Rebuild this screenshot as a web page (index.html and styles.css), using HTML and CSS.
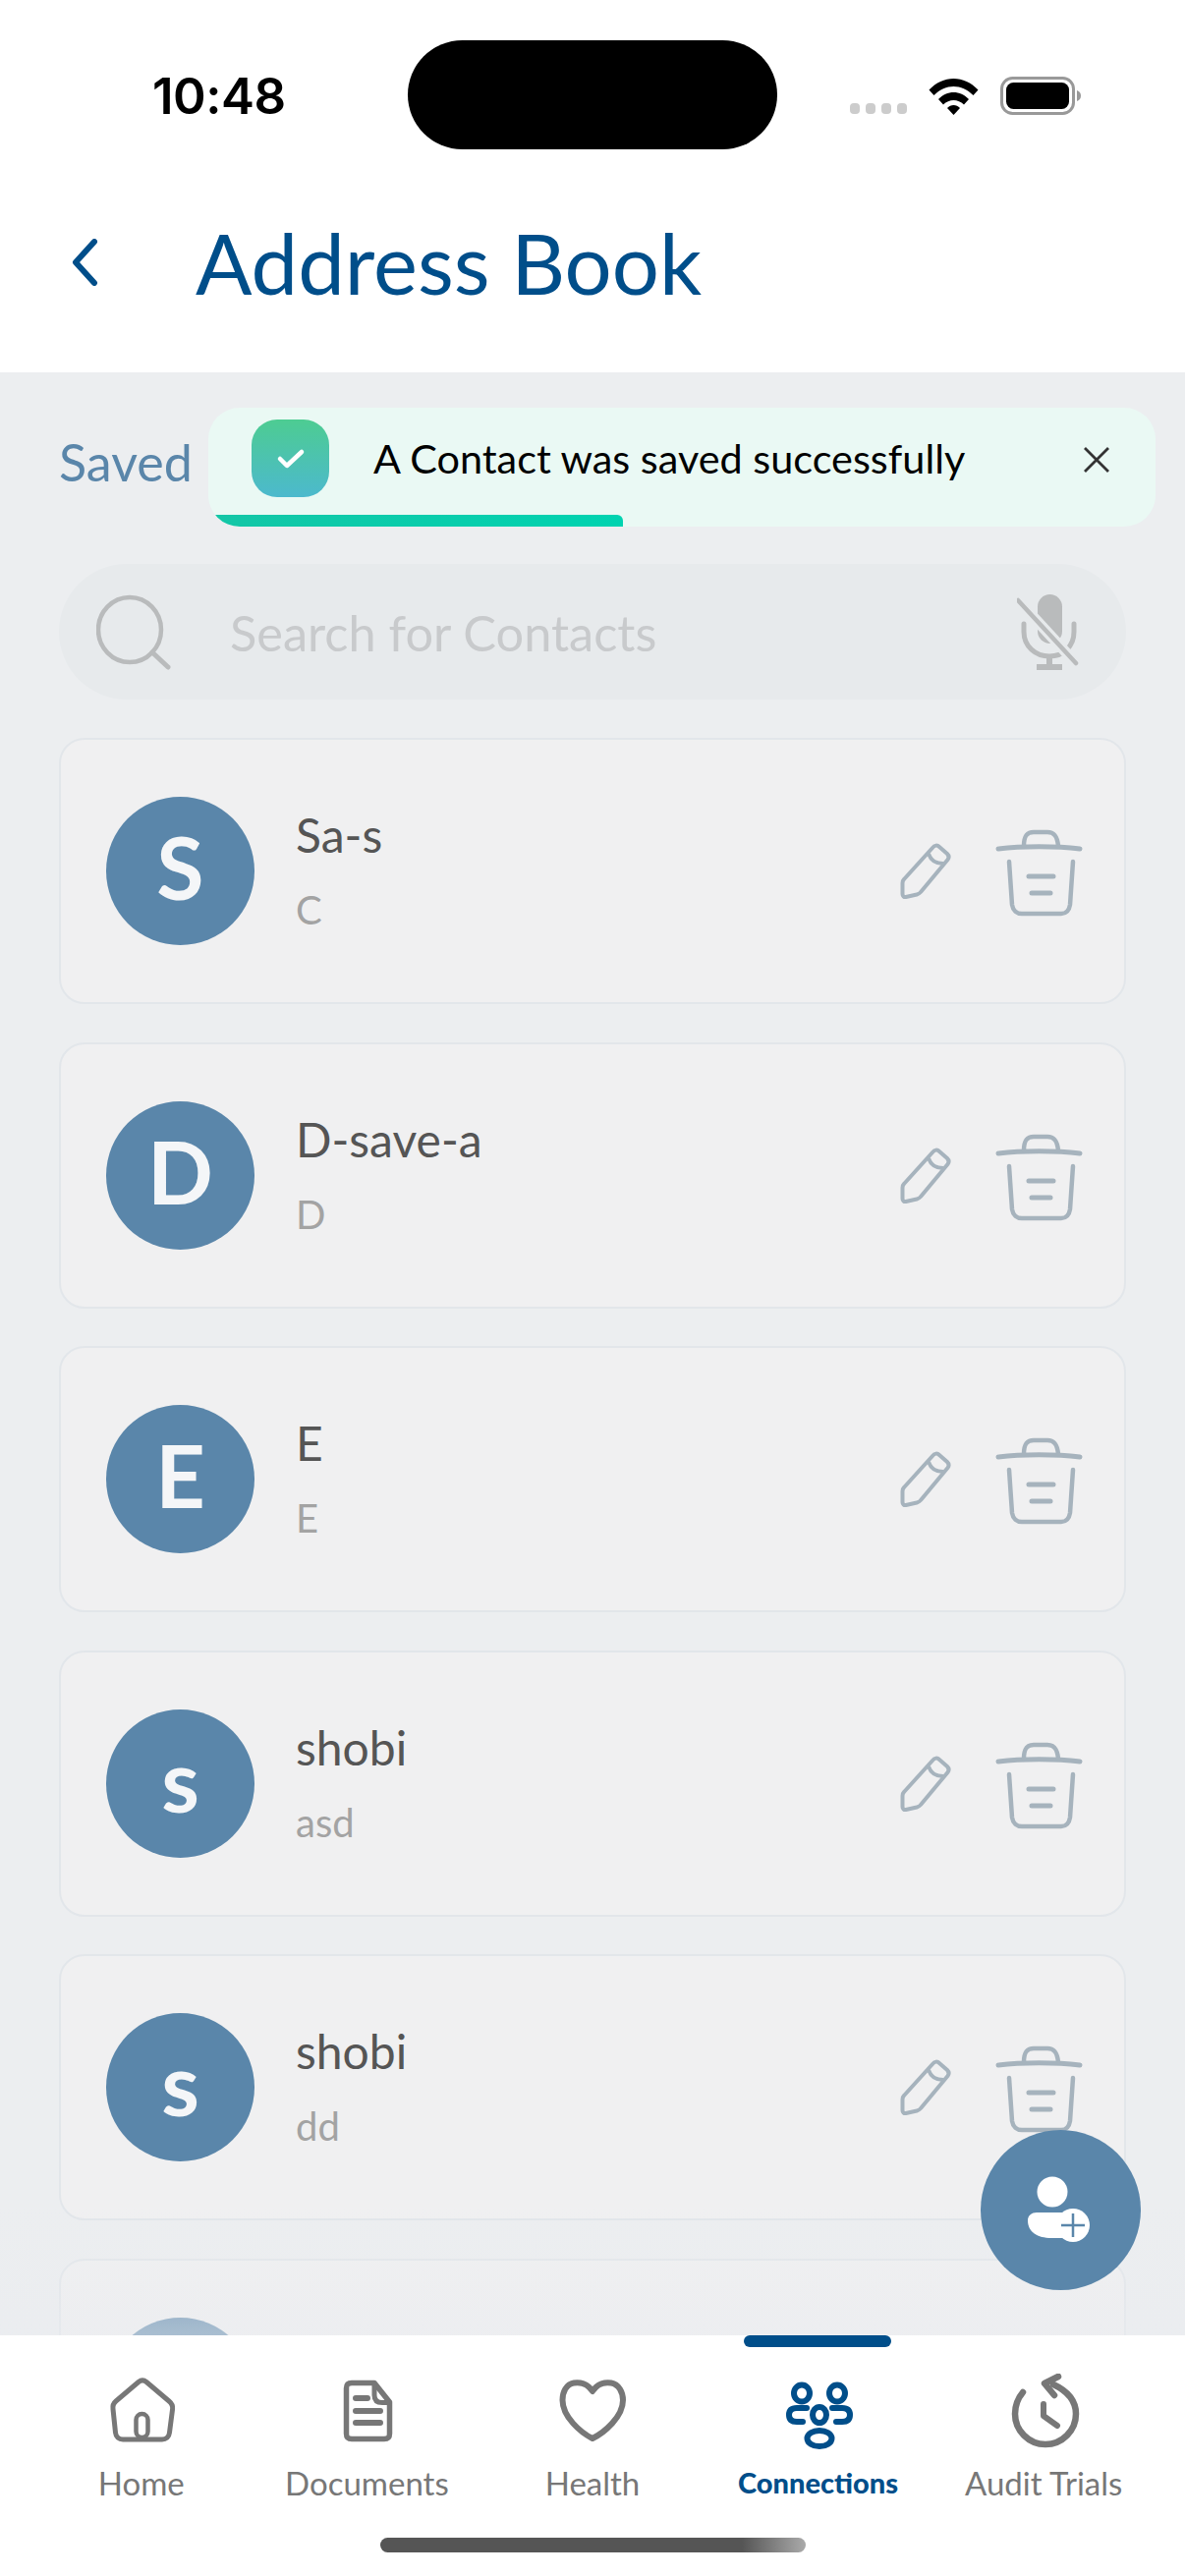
FILE: index.html
```html
<!DOCTYPE html>
<html lang="en">
<head>
<meta charset="utf-8">
<title>Address Book</title>
<link rel="stylesheet" href="styles.css">
</head>
<body>
<div class="phone">
  <header class="top">
    <div class="status">
      <span class="time">10:48</span>
      <div class="notch"></div>
      <div class="status-icons">
        <div class="signal"><i></i><i></i><i></i><i></i></div>
        <svg class="wifi" width="51" height="38" viewBox="0 0 50 38"><path d="M0 12.500C14 -3 36 -3 50 12.500L45 18C33 6 17 6 5 18Z" fill="#000"/><path d="M9.500 22C18 12.500 32 12.500 40.500 22L35.500 27.500C29.500 21.500 20.500 21.500 14.500 27.500Z" fill="#000"/><path d="M18.500 31C22 27 28 27 31.500 31L25 38Z" fill="#000"/></svg>
        <svg class="battery" width="82" height="39" viewBox="0 0 82 39"><rect x="1.500" y="1.500" width="73" height="36" rx="11" fill="none" stroke="#999" stroke-width="3"/><rect x="6" y="6" width="64" height="27" rx="7.500" fill="#000"/><path d="M78 14C81 15 82 17 82 19.500C82 22 81 24 78 25Z" fill="#999"/></svg>
      </div>
    </div>
    <div class="titlebar">
      <svg class="back" width="28" height="48" viewBox="0 0 28 48"><path d="M24 3L5 24L24 45" fill="none" stroke="#004e8a" stroke-width="6" stroke-linecap="round" stroke-linejoin="round"/></svg>
      <h1 class="title">Address Book</h1>
    </div>
  </header>

  <main class="content">
    <div class="saved">Saved</div>
    <div class="search">
      <svg class="search-icon" width="76" height="78" viewBox="0 0 76 78"><ellipse cx="34" cy="37" rx="32" ry="33" fill="none" stroke="#b9bbbc" stroke-width="4.500"/><path d="M57 60L73 75" stroke="#b9bbbc" stroke-width="5" stroke-linecap="round"/></svg>
      <span class="placeholder">Search for Contacts</span>
      <svg class="mic" width="64" height="80" viewBox="0 0 64 80"><rect x="21" y="2" width="25" height="50" rx="12.500" fill="#b9bbbc"/><path d="M7 32V40C7 55 19 65 33 65C47 65 58 55 58 40V32" fill="none" stroke="#b9bbbc" stroke-width="5" stroke-linecap="round"/><path d="M33 65V76M20 76H46" stroke="#b9bbbc" stroke-width="6"/><path d="M1 8L60 72" stroke="#e7eaec" stroke-width="11"/><path d="M1 8L60 72" stroke="#b9bbbc" stroke-width="4.500" stroke-linecap="round"/></svg>
    </div>

    <div class="cards">
      <article class="card">
        <div class="avatar">S</div>
        <div class="info"><div class="name">Sa-s</div><div class="sub">C</div></div>
        <svg class="pencil" width="55" height="61" viewBox="0 0 55 61"><use href="#pencil-shape"/></svg>
        <svg class="trash" width="95" height="92" viewBox="0 0 95 92"><use href="#trash-shape"/></svg>
      </article>
      <article class="card">
        <div class="avatar">D</div>
        <div class="info"><div class="name">D-save-a</div><div class="sub">D</div></div>
        <svg class="pencil" width="55" height="61" viewBox="0 0 55 61"><use href="#pencil-shape"/></svg>
        <svg class="trash" width="95" height="92" viewBox="0 0 95 92"><use href="#trash-shape"/></svg>
      </article>
      <article class="card">
        <div class="avatar">E</div>
        <div class="info"><div class="name">E</div><div class="sub">E</div></div>
        <svg class="pencil" width="55" height="61" viewBox="0 0 55 61"><use href="#pencil-shape"/></svg>
        <svg class="trash" width="95" height="92" viewBox="0 0 95 92"><use href="#trash-shape"/></svg>
      </article>
      <article class="card">
        <div class="avatar">s</div>
        <div class="info"><div class="name">shobi</div><div class="sub">asd</div></div>
        <svg class="pencil" width="55" height="61" viewBox="0 0 55 61"><use href="#pencil-shape"/></svg>
        <svg class="trash" width="95" height="92" viewBox="0 0 95 92"><use href="#trash-shape"/></svg>
      </article>
      <article class="card">
        <div class="avatar">s</div>
        <div class="info"><div class="name">shobi</div><div class="sub">dd</div></div>
        <svg class="pencil" width="55" height="61" viewBox="0 0 55 61"><use href="#pencil-shape"/></svg>
        <svg class="trash" width="95" height="92" viewBox="0 0 95 92"><use href="#trash-shape"/></svg>
      </article>
      <article class="card">
        <div class="avatar"></div>
      </article>
    </div>

    <div class="fade"></div>
  </main>

  <div class="toast">
    <div class="toast-icon">
      <svg width="30" height="24" viewBox="0 0 30 24"><path d="M4 12L11 19L26 5" fill="none" stroke="#fff" stroke-width="4.500" stroke-linecap="round" stroke-linejoin="round"/></svg>
    </div>
    <span class="toast-text">A Contact was saved successfully</span>
    <svg class="toast-close" width="28" height="28" viewBox="0 0 28 28"><path d="M2 2L26 26M26 2L2 26" stroke="#333" stroke-width="2.800"/></svg>
    <div class="toast-progress"></div>
  </div>

  <button class="fab" type="button" aria-label="Add contact">
    <svg width="76" height="72" viewBox="0 0 76 72"><ellipse cx="29" cy="17" rx="15.500" ry="15.500" fill="#fff"/><path d="M13 38H44C37 43 37 58 43 64H28C14 64 4 58 4 46C4 41 8 38 13 38Z" fill="#fff"/><circle cx="50" cy="51" r="17" fill="#fff"/><path d="M50 39V63M38 51H62" stroke="#5a86aa" stroke-width="2.500"/></svg>
  </button>

  <nav class="tabbar">
    <a class="tab">
      <svg width="80" height="80" viewBox="0 0 80 80"><path d="M37 8.500C39.500 6.500 42.500 6.500 45 8.500L68 28C71 30.500 72 33 71.600 36L68.500 60C68 64.500 65 67 61 67H21C17 67 14 64.500 13.500 60L11 36C10.600 33 11 30.500 14 28Z" fill="none" stroke="#777" stroke-width="5" stroke-linejoin="round"/><rect x="34.500" y="41" width="12" height="24" rx="6" fill="none" stroke="#777" stroke-width="4.500"/></svg>
      <span class="tab-label">Home</span>
    </a>
    <a class="tab">
      <svg width="80" height="80" viewBox="0 0 80 80"><path d="M48 9.500H25C21 9.500 19.500 11 19.500 15V61C19.500 65 21 66.500 25 66.500H58C62 66.500 63.500 65 63.500 61V29Z" fill="none" stroke="#777" stroke-width="5.500" stroke-linejoin="round"/><path d="M48 9.500V22C48 27 51 29.500 56 29.500H63.500" fill="none" stroke="#777" stroke-width="5"/><path d="M29 25H41M29 38H54M29 50H54" stroke="#777" stroke-width="6" stroke-linecap="round"/></svg>
      <span class="tab-label">Documents</span>
    </a>
    <a class="tab">
      <svg width="80" height="80" viewBox="0 0 80 80"><path d="M40 18C35 10 27 8.500 21 9.500C13 11 9.500 19 9.500 27C9.500 44 28 60 40 66C52 60 71 44 71 27C71 19 67 11 59 9.500C53 8.500 45 10 40 18Z" fill="none" stroke="#777" stroke-width="6" stroke-linejoin="round"/></svg>
      <span class="tab-label">Health</span>
    </a>
    <a class="tab tab-active">
      <svg width="80" height="80" viewBox="0 0 80 80"><g fill="none" stroke="#004e8a" stroke-width="6" stroke-linecap="round"><ellipse cx="23" cy="20" rx="8" ry="8.500"/><ellipse cx="59" cy="20" rx="8" ry="8.500"/><ellipse cx="41" cy="42" rx="7" ry="8"/><ellipse cx="41" cy="66" rx="12.500" ry="8"/><path d="M28 35H18C12 35 10 38 10 42C10 46 12 49 18 49H24"/><path d="M54 35H64C70 35 72 38 72 42C72 46 70 49 64 49H58"/></g></svg>
      <span class="tab-label">Connections</span>
    </a>
    <a class="tab">
      <svg width="80" height="80" viewBox="0 0 80 80"><path d="M19 19C14 25 11 32 11 41C11 58 25 72 42 72C59 72 73 58 73 41C73 28 65 18 50 11" fill="none" stroke="#777" stroke-width="6.500" stroke-linecap="round"/><path d="M55 3L41 10L51 22" fill="none" stroke="#777" stroke-width="6.500" stroke-linecap="round" stroke-linejoin="round"/><path d="M40 31V43L54 53" fill="none" stroke="#777" stroke-width="6" stroke-linecap="round" stroke-linejoin="round"/></svg>
      <span class="tab-label">Audit Trials</span>
    </a>
    <div class="home-bar"></div>
  </nav>

  <svg class="defs" width="0" height="0">
    <defs>
      <g id="pencil-shape" fill="none" stroke="#a6b3bd" stroke-width="4" stroke-linejoin="round">
        <path d="M34 6C36 3 39 3 41 5L49 12C51 14 51 16 49.500 18L22 51C21 52.500 19.500 53 18 53.500L7 56C5 56.500 3.500 55 3.500 53V42C3.500 40.500 4 39 5 38Z"/>
        <path d="M30 12C33 20 38 22 45 22"/>
      </g>
      <g id="trash-shape" fill="none" stroke="#a6b3bd" stroke-linecap="round">
        <path d="M6 21C30 18 65 18 89 21" stroke-width="5"/>
        <path d="M32 18C32 8 35 4 42 4H56C63 4 66 8 67 18" stroke-width="4.500"/>
        <path d="M17 34L20 78C21 84 25 87 30 87H70C75 87 78 84 79 78L82 34" stroke-width="4.500"/>
        <path d="M37 49H62M40 66H59" stroke-width="5"/>
      </g>
    </defs>
  </svg>
</div>
</body>
</html>
```
FILE: styles.css
```css
* { box-sizing: border-box; }
html, body { margin: 0; padding: 0; }
body { background: #fff; font-family: "Lato", "Noto Sans", sans-serif; }
.phone { position: relative; width: 1206px; height: 2622px; overflow: hidden; display: flex; flex-direction: column; background: #eceef0; }

.top { height: 379px; background: #fff; flex: none; }
.status { position: relative; height: 219px; display: flex; align-items: flex-start; justify-content: space-between; padding: 68px 106px 0 155px; }
.time { font-family: "Inter", "Liberation Sans", sans-serif; font-weight: 600; font-size: 51px; line-height: 60px; color: #000; letter-spacing: -0.5px; }
.notch { position: absolute; left: 415px; top: 41px; width: 376px; height: 111px; border-radius: 56px; background: #000; }
.status-icons { display: flex; align-items: flex-end; gap: 22px; margin-top: 10px; }
.signal { display: flex; gap: 6px; padding-bottom: 1px; }
.signal i { display: block; width: 10px; height: 11px; border-radius: 4px; background: #ccc; }

.titlebar { display: flex; align-items: center; padding: 0 0 0 72px; height: 96px; }
.back { flex: none; margin-right: 99px; }
.title { margin: 0; font-weight: 400; font-size: 85px; line-height: 96px; color: #004e8a; }

.content { position: relative; flex: 1; min-height: 0; overflow: hidden; padding: 0 60px; }
.saved { margin-top: 66px; height: 50px; line-height: 50px; font-size: 52px; color: #5a86aa; }
.search { margin-top: 79px; height: 138px; border-radius: 69px; background: #e7eaec; display: flex; align-items: center; padding: 0 47px 0 38px; }
.search-icon { flex: none; }
.placeholder { flex: 1; margin-left: 60px; font-size: 50.500px; color: #c8cacc; }
.mic { flex: none; }

.cards { margin-top: 39px; display: flex; flex-direction: column; gap: 38.600px; }
.card { flex: none; height: 271px; display: flex; align-items: flex-start; background: #f0f0f1; border: 2px solid #e2e6ea; border-radius: 26px; padding: 58px 39px 0 46px; }
.avatar { flex: none; width: 151px; height: 151px; border-radius: 50%; background: #5a86aa; color: #f4f6f8; font-weight: 700; font-size: 88px; line-height: 143px; text-align: center; }
.info { flex: 1; margin-left: 42px; margin-top: -5px; }
.name { font-size: 48px; line-height: 60px; color: #555; margin-top: 14px; }
.sub { font-size: 40px; line-height: 50px; color: #a3a3a3; margin-top: 21px; }
.pencil { flex: none; margin-top: 46px; margin-right: 40px; }
.trash { flex: none; margin-top: 32px; }

.fade { position: absolute; left: 0; right: 0; bottom: 0; height: 130px; background: linear-gradient(to bottom, rgba(234,236,240,0), rgba(234,236,240,0.55)); }

.toast { position: absolute; left: 212px; top: 415px; width: 964px; height: 121px; border-radius: 32px; background: #eaf9f4; display: flex; align-items: flex-start; padding: 12px 46px 0 44px; overflow: hidden; }
.toast-icon { flex: none; width: 79px; height: 79px; border-radius: 26px; background: linear-gradient(to bottom, #4dcc92, #4cb9cd); display: flex; align-items: center; justify-content: center; }
.toast-text { flex: 1; margin-left: 45px; font-size: 41.400px; line-height: 78px; color: #000; }
.toast-close { flex: none; margin-top: 27px; }
.toast-progress { position: absolute; left: 0; bottom: 0; width: 422px; height: 12px; border-radius: 0 6px 0 0; background: linear-gradient(to right, #14c6a6, #00d3b0); }

.fab { position: absolute; left: 998px; top: 2168px; width: 163px; height: 163px; padding: 0; border: 0; border-radius: 50%; background: #5a86aa; display: flex; align-items: center; justify-content: center; }

.tabbar { position: relative; flex: none; height: 245px; background: #fff; display: flex; align-items: flex-start; padding: 39px 29px 0; }
.tab { flex: 1; display: flex; flex-direction: column; align-items: center; }
.tab-label { margin-top: 9px; font-size: 33px; line-height: 44px; color: #777; white-space: nowrap; }
.tab-active { position: relative; }
.tab-active::before { content: ""; position: absolute; left: 39px; top: -39px; width: 150px; height: 12px; border-radius: 6px; background: #004e8a; }
.tab-active .tab-label { font-weight: 900; font-size: 29px; color: #004e8a; }
.home-bar { position: absolute; left: 387px; top: 206px; width: 433px; height: 15px; border-radius: 8px; background: linear-gradient(to right, #555 0%, #555 85%, #aaa 100%); }
.defs { position: absolute; }
```
